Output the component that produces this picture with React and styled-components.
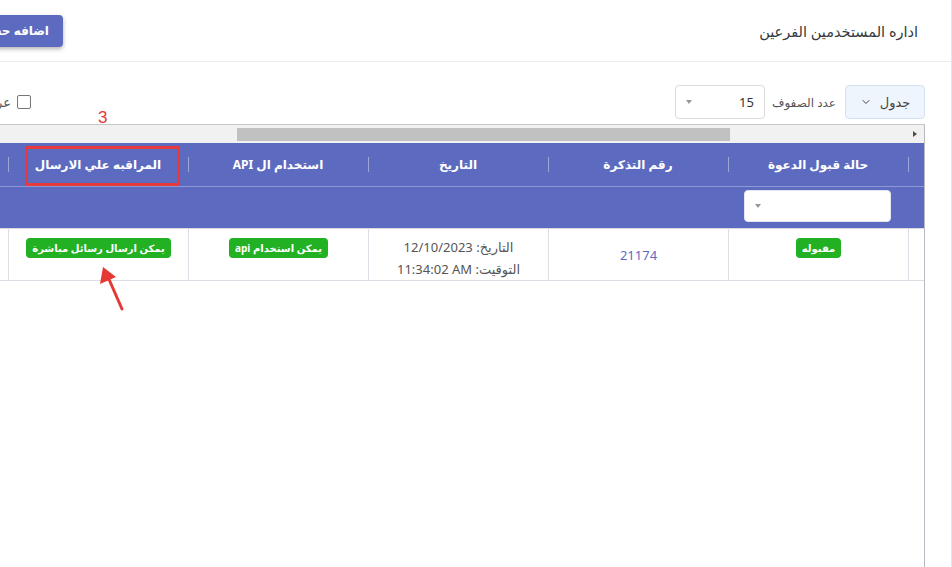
import React from "react";
import styled, { createGlobalStyle } from "styled-components";
import { ChevronDown } from "lucide-react";

const GlobalStyle = createGlobalStyle`
  html, body { margin: 0; padding: 0; background: #fff; overflow: hidden; }
  body { font-family: "Noto Sans", "DejaVu Sans", sans-serif; }
  * { box-sizing: border-box; }
`;

const Page = styled.div`
  direction: rtl;
  width: 952px;
  height: 567px;
  overflow: hidden;
  position: relative;
  background: #fff;
`;

const Card = styled.div`
  width: 1040px;
  height: 567px;
  border-right: 1px solid #e4e4ec;
  background: #fff;
  display: flex;
  flex-direction: column;
`;

const CardHeader = styled.div`
  height: 62px;
  flex: none;
  display: flex;
  align-items: center;
  justify-content: space-between;
  padding: 0 33px 0 21px;
  border-bottom: 1px solid #ececf0;
`;

const Title = styled.h1`
  margin: 0;
  font-size: 14.5px;
  font-weight: 400;
  color: #343a40;
`;

const AddButton = styled.button`
  width: 130px;
  height: 32px;
  border: none;
  border-radius: 4px;
  background: #5c6bc0;
  color: #fff;
  font-family: inherit;
  font-size: 12px;
  font-weight: 700;
  text-align: right;
  padding: 0 14px 0 0;
  white-space: nowrap;
  overflow: hidden;
  box-shadow: 0 2px 4px rgba(0, 0, 0, 0.3);
`;

const Body = styled.div`
  flex: 1;
  display: flex;
  flex-direction: column;
  padding: 23px 26px 0 26px;
  min-height: 0;
`;

const Toolbar = styled.div`
  height: 34px;
  flex: none;
  display: flex;
  align-items: center;
`;

const ViewButton = styled.button`
  width: 80px;
  height: 34px;
  display: flex;
  align-items: center;
  justify-content: center;
  gap: 8px;
  background: #eef5fd;
  border: 1px solid #d3e2f2;
  border-radius: 4px;
  color: #444;
  font-family: inherit;
  font-size: 13px;
  padding: 0;
`;

const RowsLabel = styled.span`
  font-size: 12px;
  color: #555;
  margin: 0 9px 0 7px;
`;

const SelectBox = styled.div`
  width: ${(p) => p.$width}px;
  height: ${(p) => p.$height}px;
  display: flex;
  align-items: center;
  justify-content: space-between;
  padding: 0 10px 0 10px;
  background: #fff;
  border: 1px solid ${(p) => p.$border};
  border-radius: 4px;
  font-size: 13px;
  color: #333;
`;

const Caret = styled.span`
  width: 0;
  height: 0;
  border-left: 3.5px solid transparent;
  border-right: 3.5px solid transparent;
  border-top: 4px solid #999;
`;

const CheckGroup = styled.label`
  margin-right: auto;
  display: flex;
  align-items: center;
  gap: 6px;
`;

const CheckBox = styled.span`
  width: 14px;
  height: 14px;
  border: 1.5px solid #777;
  border-radius: 2px;
  background: #fff;
`;

const CheckLabel = styled.span`
  width: 73px;
  font-size: 13px;
  color: #555;
  white-space: nowrap;
  overflow: hidden;
`;

const TableWrap = styled.div`
  margin-top: 5px;
  flex: 1;
  border-top: 1px solid #c8c8c8;
  border-right: 1px solid #b9b9c2;
  border-left: 1px solid #b9b9c2;
  overflow: hidden;
  display: flex;
  flex-direction: column;
`;

const ScrollTrack = styled.div`
  height: 18px;
  flex: none;
  background: #f1f1f1;
  display: flex;
  align-items: center;
`;

const ScrollArrow = styled.div`
  width: 16px;
  height: 18px;
  flex: none;
  display: flex;
  align-items: center;
  justify-content: center;
`;

const ArrowGlyph = styled.span`
  width: 0;
  height: 0;
  border-top: 3.5px solid transparent;
  border-bottom: 3.5px solid transparent;
  border-left: 4px solid #505050;
  margin-left: -2px;
`;

const ScrollThumb = styled.div`
  width: 493px;
  height: 13px;
  flex: none;
  margin-right: 178px;
  background: #c1c1c1;
`;

const Row = styled.div`
  display: grid;
  grid-template-columns: 16px repeat(6, 180px);
  height: ${(p) => p.$height}px;
  flex: none;
  background: ${(p) => p.$bg};
  border-bottom: 1px solid ${(p) => p.$line};
`;

const HeadCell = styled.div`
  position: relative;
  display: flex;
  align-items: center;
  justify-content: center;
  color: #fff;
  font-size: 12px;
  font-weight: 700;
  white-space: nowrap;
  &::after {
    content: "";
    position: absolute;
    left: 0;
    top: 14px;
    width: 1px;
    height: 15px;
    background: rgba(255, 255, 255, 0.4);
  }
`;

const FilterCell = styled.div`
  display: flex;
  justify-content: center;
  padding: 3px 17px 0 15px;
`;

const Cell = styled.div`
  border-left: 1px solid #dedee6;
  display: flex;
  flex-direction: column;
  align-items: center;
  justify-content: ${(p) => (p.$top ? "flex-start" : "center")};
  padding-top: ${(p) => p.$pt || 0}px;
  font-size: 13px;
  color: #555;
  text-align: center;
`;

const Badge = styled.span`
  display: inline-flex;
  align-items: center;
  height: 20px;
  padding: 0 6px;
  border-radius: 4px;
  background: #22b123;
  color: #fff;
  font-size: 10px;
  font-weight: 700;
  white-space: nowrap;
`;

const TicketLink = styled.a`
  color: #5c6bc0;
  text-decoration: none;
  font-size: 13px;
`;

const DateLine = styled.div`
  line-height: 22px;
  white-space: nowrap;
`;

const LtrValue = styled.bdi`
  direction: ltr;
  unicode-bidi: isolate;
`;

const NumberMark = styled.span`
  position: absolute;
  left: 98px;
  top: 108px;
  color: #e53935;
  font-family: "Liberation Sans", sans-serif;
  font-size: 17px;
  direction: ltr;
`;

const RedBox = styled.div`
  position: absolute;
  left: 25px;
  top: 146px;
  width: 155px;
  height: 40px;
  border: 3px solid #e5393c;
`;

const ArrowSvg = styled.svg`
  position: absolute;
  left: 90px;
  top: 260px;
`;

const headers = [
  "",
  "حالة قبول الدعوة",
  "رقم التذكرة",
  "التاريخ",
  "استخدام ال API",
  "المراقبه علي الارسال",
  "",
];

export default function App() {
  return (
    <>
      <GlobalStyle />
      <Page>
        <Card>
          <CardHeader>
            <Title>اداره المستخدمين الفرعين</Title>
            <AddButton>اضافه حساب فرعي</AddButton>
          </CardHeader>
          <Body>
            <Toolbar>
              <ViewButton>
                جدول
                <ChevronDown size={12} strokeWidth={2} color="#444" />
              </ViewButton>
              <RowsLabel>عدد الصفوف</RowsLabel>
              <SelectBox $width={90} $height={34} $border="#dcdcdc">
                <span>15</span>
                <Caret />
              </SelectBox>
              <CheckGroup>
                <CheckBox />
                <CheckLabel>عرض الكل المحذوفين</CheckLabel>
              </CheckGroup>
            </Toolbar>
            <TableWrap>
              <ScrollTrack>
                <ScrollArrow>
                  <ArrowGlyph />
                </ScrollArrow>
                <ScrollThumb />
              </ScrollTrack>
              <Row $height={44} $bg="#5c6bc0" $line="#8e98d6">
                {headers.map((h, i) => (
                  <HeadCell key={i}>{h}</HeadCell>
                ))}
              </Row>
              <Row $height={42} $bg="#5c6bc0" $line="#d9d9e3">
                <FilterCell />
                <FilterCell>
                  <SelectBox $width={147} $height={32} $border="#e6e6f0">
                    <span />
                    <Caret />
                  </SelectBox>
                </FilterCell>
                <FilterCell />
                <FilterCell />
                <FilterCell />
                <FilterCell />
                <FilterCell />
              </Row>
              <Row $height={52} $bg="#fff" $line="#dcdce4">
                <Cell />
                <Cell $top $pt={9}>
                  <Badge>مقبوله</Badge>
                </Cell>
                <Cell>
                  <TicketLink href="#">21174</TicketLink>
                </Cell>
                <Cell $top $pt={7}>
                  <DateLine>
                    التاريخ: <LtrValue>12/10/2023</LtrValue>
                  </DateLine>
                  <DateLine>
                    التوقيت: <LtrValue>11:34:02 AM</LtrValue>
                  </DateLine>
                </Cell>
                <Cell $top $pt={9}>
                  <Badge>يمكن استخدام api</Badge>
                </Cell>
                <Cell $top $pt={9}>
                  <Badge>يمكن ارسال رسائل مباشرة</Badge>
                </Cell>
                <Cell />
              </Row>
            </TableWrap>
          </Body>
        </Card>
        <NumberMark>3</NumberMark>
        <RedBox />
        <ArrowSvg width="40" height="56" viewBox="0 0 40 56">
          <line x1="32" y1="49" x2="18" y2="17" stroke="#e53935" strokeWidth="3" strokeLinecap="round" />
          <polygon points="13,7 10,24 26,17" fill="#e53935" />
        </ArrowSvg>
      </Page>
    </>
  );
}
